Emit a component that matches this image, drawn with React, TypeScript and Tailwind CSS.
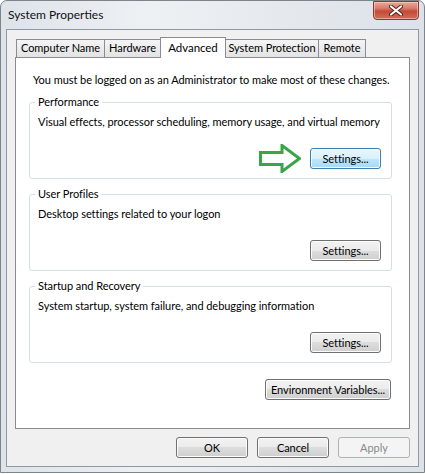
import type { ReactNode } from "react";

type ButtonVariant = "normal" | "focused" | "disabled";

function getButtonStyles(variant: ButtonVariant): string {
  switch (variant) {
    case "focused":
      return "border-[#3c7fb1] text-black bg-[linear-gradient(#eaf6fd_0%,#d9f0fc_50%,#bee6fd_50%,#a7d9f5_100%)] shadow-[inset_0_0_0_1px_#f4fbff]";
    case "disabled":
      return "border-[#adb2b5] text-[#8a8a8a] bg-[#f4f4f4]";
    default:
      return "border-[#707070] text-black bg-[linear-gradient(#f2f2f2_0%,#ebebeb_50%,#dddddd_50%,#cfcfcf_100%)] shadow-[inset_0_0_0_1px_#fcfcfc]";
  }
}

function WinButton({
  label,
  variant = "normal",
  className = "",
}: {
  label: string;
  variant?: ButtonVariant;
  className?: string;
}) {
  return (
    <button
      type="button"
      disabled={variant === "disabled"}
      className={`flex h-[21px] shrink-0 items-center justify-center whitespace-nowrap rounded-[3px] border leading-none ${getButtonStyles(variant)} ${className}`}
    >
      {label}
    </button>
  );
}

function GroupBox({ title, description, children }: { title: string; description: string; children: ReactNode }) {
  return (
    <fieldset className="h-[85px] min-w-0 rounded-[3px] border border-[#d5dfe5] px-[8px] pt-[4px]">
      <legend className="-ml-[3px] px-[3px] leading-[16px]">{title}</legend>
      <p className="whitespace-nowrap leading-[15px]">{description}</p>
      <div className="mt-[19px] flex h-[21px] items-center justify-end gap-[9px] pr-[2px]">{children}</div>
    </fieldset>
  );
}

function GreenArrow() {
  return (
    <svg width="42" height="29" viewBox="0 0 42 29" className="shrink-0" aria-hidden="true">
      <polygon
        points="1.5,8.5 23,8.5 23,1.5 40.5,14.5 23,27.5 23,20.5 1.5,20.5"
        fill="none"
        stroke="#38a547"
        strokeWidth="3"
        strokeLinejoin="miter"
      />
    </svg>
  );
}

function CloseButton() {
  return (
    <div className="flex h-[19px] w-[46px] items-center justify-center rounded-[4px] rounded-t-none border border-[#8c3a2f] bg-[linear-gradient(#e9a99b_0%,#d8806d_35%,#c44a35_55%,#d0705c_100%)] shadow-[inset_0_0_0_1px_rgba(255,220,210,0.5)]">
      <svg width="14" height="11" viewBox="0 0 14 11" aria-hidden="true">
        <path d="M2 1.5 L12 9.5 M12 1.5 L2 9.5" stroke="#5b1d14" strokeWidth="4" strokeLinecap="round" />
        <path d="M2 1.5 L12 9.5 M12 1.5 L2 9.5" stroke="#ffffff" strokeWidth="2.2" strokeLinecap="round" />
      </svg>
    </div>
  );
}

const TABS = [
  { label: "Computer Name", width: "w-[89px]" },
  { label: "Hardware", width: "w-[57px]" },
  { label: "Advanced", width: "w-[66px]", selected: true },
  { label: "System Protection", width: "w-[94px]" },
  { label: "Remote", width: "w-[48px]" },
];

export default function App() {
  return (
    <div className="h-[474px] w-[425px] bg-white font-['Lato','Noto_Sans',sans-serif] text-[11px] tracking-[-0.05px] text-black">
      <div className="flex h-[473px] w-[425px] flex-col rounded-t-[7px] border border-[#7d848c] bg-[linear-gradient(to_right,#dde3e9,#eef1f4_35%,#e4e8ed_70%,#dce2e8)] px-[5px] pb-[5px]">
        {/* title bar */}
        <div className="flex h-[28px] items-start justify-between pl-[2px]">
          <span className="self-center text-[12px] tracking-normal text-[#111]">System Properties</span>
          <CloseButton />
        </div>

        {/* client area */}
        <div className="flex flex-1 flex-col border border-[#8e99a5] bg-[#f0f0f0] px-[8px] pt-[7px]">
          <div className="flex h-[20px] items-end pl-[1px]">
            {TABS.map((tab, i) =>
              tab.selected ? (
                <div
                  key={tab.label}
                  className={`relative z-10 -mb-px -ml-px flex h-[21px] items-start justify-center whitespace-nowrap border border-b-0 border-[#898c95] bg-white pt-[1px] text-[11.5px] ${tab.width}`}
                >
                  {tab.label}
                </div>
              ) : (
                <div
                  key={tab.label}
                  className={`flex h-[18px] items-center justify-center whitespace-nowrap border border-b-0 border-[#898c95] bg-[linear-gradient(#f4f4f4,#e3e3e3)] ${i > 0 ? "-ml-px" : ""} ${tab.width}`}
                >
                  {tab.label}
                </div>
              ),
            )}
          </div>

          {/* tab panel */}
          <div className="h-[372px] border border-[#898c95] bg-white pl-[13px] pr-[17px] pt-[14px]">
            <p className="whitespace-nowrap pl-[4px] leading-[15px]">
              You must be logged on as an Administrator to make most of these changes.
            </p>

            <div className="mt-[7px] flex flex-col gap-[7px]">
              <GroupBox title="Performance" description="Visual effects, processor scheduling, memory usage, and virtual memory">
                <GreenArrow />
                <WinButton label="Settings..." variant="focused" className="w-[71px]" />
              </GroupBox>
              <GroupBox title="User Profiles" description="Desktop settings related to your logon">
                <WinButton label="Settings..." className="w-[71px]" />
              </GroupBox>
              <GroupBox title="Startup and Recovery" description="System startup, system failure, and debugging information">
                <WinButton label="Settings..." className="w-[71px]" />
              </GroupBox>
            </div>

            <div className="mt-[16px] flex justify-end pr-[1px]">
              <WinButton label="Environment Variables..." className="w-[126px]" />
            </div>
          </div>

          {/* dialog buttons */}
          <div className="mt-[8px] flex justify-end gap-[9px]">
            <WinButton label="OK" className="w-[72px]" />
            <WinButton label="Cancel" className="w-[72px]" />
            <WinButton label="Apply" variant="disabled" className="w-[72px]" />
          </div>
        </div>
      </div>
    </div>
  );
}
